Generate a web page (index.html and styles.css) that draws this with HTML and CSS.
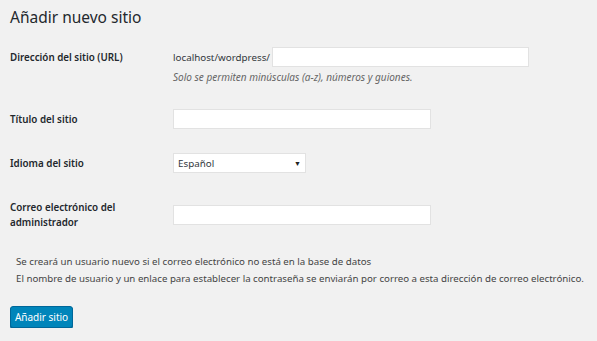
FILE: index.html
```html
<!DOCTYPE html>
<html lang="es">

<head>
    <meta charset="UTF-8">
    <title>Añadir nuevo sitio</title>
    <link rel="stylesheet" href="styles.css">
</head>

<body>
    <div class="wrap">
        <h1>Añadir nuevo sitio</h1>

        <form class="form-table">
            <!-- URL -->
            <div class="row row-url">
                <label class="label">Dirección del sitio (URL)</label>
                <div class="field">
                    <div class="url-line">
                        <span>localhost/wordpress/</span>
                        <input type="text" class="input input-url">
                    </div>
                    <p class="description">Solo se permiten minúsculas (a-z), números y guiones.</p>
                </div>
            </div>

            <!-- Titulo -->
            <div class="row row-title">
                <label class="label">Título del sitio</label>
                <div class="field">
                    <input type="text" class="input input-wide">
                </div>
            </div>

            <!-- Idioma -->
            <div class="row row-lang">
                <label class="label">Idioma del sitio</label>
                <div class="field">
                    <div class="select">
                        <span>Español</span>
                        <span class="arrow">&#9660;</span>
                    </div>
                </div>
            </div>

            <!-- Correo -->
            <div class="row row-email">
                <label class="label">Correo electrónico del administrador</label>
                <div class="field">
                    <input type="text" class="input input-wide">
                </div>
            </div>

            <div class="notes">
                <p>Se creará un usuario nuevo si el correo electrónico no está en la base de datos</p>
                <p>El nombre de usuario y un enlace para establecer la contraseña se enviarán por correo a esta dirección de correo electrónico.</p>
            </div>

            <button type="button" class="button-primary">Añadir sitio</button>
        </form>
    </div>
</body>

</html>
```

FILE: styles.css
```css
body {
    margin: 0;
    padding: 0;
    background-color: #f1f1f1;
    font-family: "Noto Sans", "Open Sans", sans-serif;
    font-size: 9.8px;
    color: #444;
}

.wrap {
    padding: 2px 10px 0 10px;
}

h1 {
    margin: 0;
    font-size: 15.5px;
    font-weight: 400;
    color: #23282d;
    line-height: 30px;
}

.row {
    display: flex;
    align-items: flex-start;
}

.row-url {
    margin-top: 15px;
    height: 62px;
}

.row-title {
    height: 44px;
}

.row-lang {
    height: 47px;
}

.row-email {
    align-items: center;
}

.label {
    width: 163px;
    flex-shrink: 0;
    min-height: 20px;
    display: flex;
    align-items: center;
    font-weight: 600;
    color: #23282d;
    line-height: 15px;
    box-sizing: border-box;
    padding-right: 30px;
}

.field {
    flex: 1;
}

.url-line {
    display: flex;
    align-items: center;
    color: #32373c;
}

.input {
    display: block;
    box-sizing: border-box;
    height: 20px;
    border: 1px solid #e2e2e2;
    background-color: #fff;
    margin: 0;
    padding: 0 4px;
    font: inherit;
}

.input-url {
    width: 257px;
    margin-left: 2px;
}

.input-wide {
    width: 258px;
}

.description {
    margin: 2px 0 0 0;
    font-style: italic;
    color: #666;
    font-size: 10px;
    line-height: 16px;
}

.select {
    box-sizing: border-box;
    width: 133px;
    height: 20px;
    border: 1px solid #e2e2e2;
    background-color: #fff;
    display: flex;
    align-items: center;
    justify-content: space-between;
    padding: 0 4px;
    color: #32373c;
}

.arrow {
    font-size: 7px;
    color: #222;
}

.notes {
    padding-left: 6px;
    margin-top: 23px;
}

.notes p {
    margin: 0;
    line-height: 17px;
    color: #444;
    font-size: 9.7px;
    white-space: nowrap;
}

.button-primary {
    display: block;
    margin-top: 19px;
    background-color: #0085ba;
    border: 1px solid #006799;
    border-radius: 3px;
    color: #fff;
    font: inherit;
    font-size: 10px;
    height: 22px;
    width: 63px;
    padding: 0;
    box-shadow: 0 1px 0 #006799;
    cursor: pointer;
}
```
